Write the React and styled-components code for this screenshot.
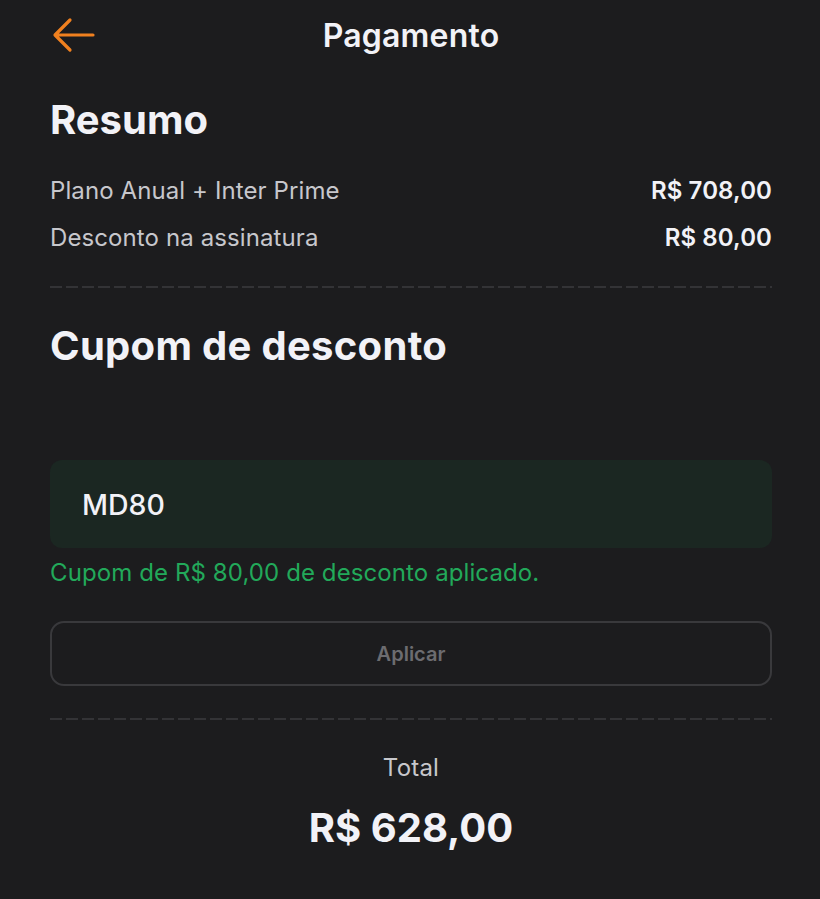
import styled, { createGlobalStyle } from "styled-components";

const GlobalStyle = createGlobalStyle`
  html, body {
    margin: 0;
    padding: 0;
    background: #1c1c1e;
  }
  body {
    font-family: "Inter", "Noto Sans", sans-serif;
    color: #f2f2f7;
    -webkit-font-smoothing: antialiased;
  }
`;

const Page = styled.div`
  min-height: 899px;
  padding: 0 48px 0 50px;
  box-sizing: border-box;
`;

const Header = styled.header`
  display: grid;
  grid-template-columns: 1fr auto 1fr;
  align-items: center;
  height: 70px;
`;

const BackButton = styled.button`
  justify-self: start;
  display: flex;
  align-items: center;
  padding: 0;
  margin-left: 2px;
  border: none;
  background: none;
  cursor: pointer;
`;

const Title = styled.h1`
  margin: 0;
  font-size: 32px;
  font-weight: 600;
  letter-spacing: 0.2px;
  color: #f2f2f7;
`;

const SectionTitle = styled.h2`
  margin: 0;
  font-size: 40px;
  line-height: 48px;
  font-weight: 700;
  letter-spacing: ${(p) => p.$tracking || "0"};
  color: #f2f2f7;
`;

const Summary = styled.section`
  padding-top: 26px;
`;

const Rows = styled.div`
  display: flex;
  flex-direction: column;
  gap: 13px;
  margin-top: 30px;
`;

const Row = styled.div`
  display: flex;
  justify-content: space-between;
  align-items: center;
  font-size: 24px;
  line-height: 34px;
  letter-spacing: 0.1px;
`;

const Label = styled.span`
  color: #c7c7cc;
`;

const Value = styled.span`
  font-weight: 600;
  color: #f2f2f7;
`;

const Divider = styled.hr`
  margin: ${(p) => p.$space || "30px 0"};
  border: none;
  height: 2px;
  background-image: linear-gradient(to right, #333336 0 12px, transparent 12px 16px);
  background-size: 16px 2px;
  background-repeat: repeat-x;
`;

const Coupon = styled.section`
  display: flex;
  flex-direction: column;
`;

const CouponInput = styled.input`
  margin-top: 90px;
  height: 88px;
  padding: 0 32px;
  border: none;
  border-radius: 12px;
  background: #1b2722;
  color: #f2f2f7;
  font-family: inherit;
  font-size: 28.5px;
  font-weight: 500;
  outline: none;
  box-sizing: border-box;
`;

const Success = styled.p`
  margin: 10px 0 0;
  font-size: 24px;
  line-height: 30px;
  letter-spacing: 0.1px;
  color: #22a95a;
`;

const ApplyButton = styled.button`
  margin-top: 33px;
  height: 65px;
  border: 2px solid #39393c;
  border-radius: 14px;
  background: transparent;
  color: #6c6c70;
  font-family: inherit;
  font-size: 20px;
  font-weight: 600;
`;

const TotalBlock = styled.section`
  display: flex;
  flex-direction: column;
  align-items: center;
  gap: 21px;
`;

const TotalLabel = styled.span`
  font-size: 24px;
  line-height: 30px;
  letter-spacing: 0.2px;
  color: #c7c7cc;
`;

const TotalValue = styled.span`
  font-size: 40px;
  line-height: 48px;
  font-weight: 700;
  color: #f2f2f7;
`;

function ArrowLeft() {
  return (
    <svg width="44" height="36" viewBox="0 0 44 36" fill="none">
      <path
        d="M41 18H4M18 3L3 18l15 15"
        stroke="#f0801f"
        strokeWidth="3.2"
        strokeLinecap="round"
        strokeLinejoin="round"
      />
    </svg>
  );
}

export default function App() {
  return (
    <>
      <GlobalStyle />
      <Page>
        <Header>
          <BackButton aria-label="Voltar">
            <ArrowLeft />
          </BackButton>
          <Title>Pagamento</Title>
        </Header>

        <Summary>
          <SectionTitle>Resumo</SectionTitle>
          <Rows>
            <Row>
              <Label>Plano Anual + Inter Prime</Label>
              <Value>R$ 708,00</Value>
            </Row>
            <Row>
              <Label>Desconto na assinatura</Label>
              <Value>R$ 80,00</Value>
            </Row>
          </Rows>
        </Summary>

        <Divider $space="31px 0 34px" />

        <Coupon>
          <SectionTitle $tracking="0.3px">Cupom de desconto</SectionTitle>
          <CouponInput defaultValue="MD80" />
          <Success>Cupom de R$ 80,00 de desconto aplicado.</Success>
          <ApplyButton disabled>Aplicar</ApplyButton>
        </Coupon>

        <Divider $space="32px 0 33px" />

        <TotalBlock>
          <TotalLabel>Total</TotalLabel>
          <TotalValue>R$ 628,00</TotalValue>
        </TotalBlock>
      </Page>
    </>
  );
}
